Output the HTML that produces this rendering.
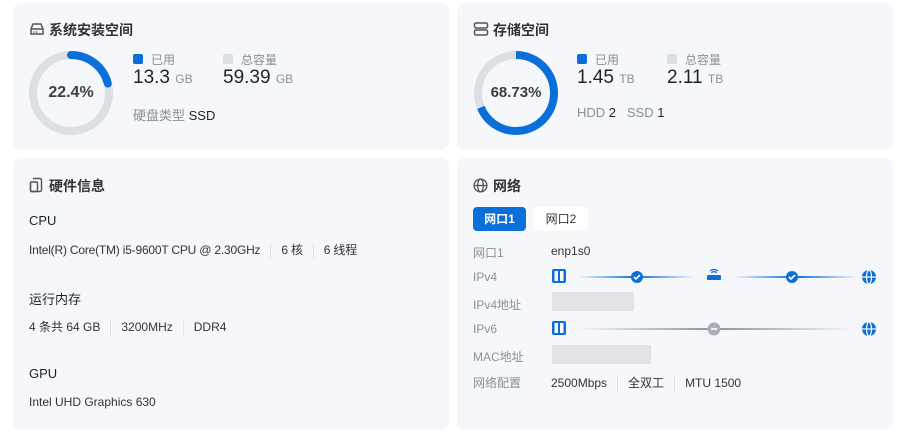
<!DOCTYPE html><html><head><meta charset="utf-8"><style>
*{margin:0;padding:0;box-sizing:border-box}
body{width:901px;height:436px;background:#fff;font-family:"Liberation Sans","Noto Sans CJK SC",sans-serif;color:#1f2329;position:relative;overflow:hidden}
.card{position:absolute;background:#f5f7fb;border-radius:8px}
.a{position:absolute;white-space:nowrap}
.t{font-size:14px;font-weight:bold;color:#333}
.g{color:#8a8f99}
.s{font-size:12px}
.sep{display:inline-block;width:1px;height:14px;background:#dcdfe6;vertical-align:middle;margin:0 10px}
.big{font-size:19px;color:#1f2329}
.big small{font-size:12px;color:#8a8f99}
.blur{position:absolute;background:#e2e3e6}
</style></head><body>
<div class="card" style="left:13px;top:3px;width:436px;height:147px"></div>
<div class="card" style="left:457px;top:3px;width:436px;height:147px"></div>
<div class="card" style="left:13px;top:158px;width:436px;height:272px"></div>
<div class="card" style="left:457px;top:158px;width:436px;height:272px"></div>

<svg class="a" style="left:29px;top:22px" width="16" height="14" viewBox="0 0 16 14"><path d="M2 7 L4 2 H12 L14 7 V12 H2 Z M2 7 H14" fill="none" stroke="#555" stroke-width="1.5"/><circle cx="5" cy="10" r=".8" fill="#555"/><circle cx="7.5" cy="10" r=".8" fill="#555"/></svg>
<div class="a t" style="left:49px;top:20px">系统安装空间</div>
<svg class="a" style="left:29px;top:51px" width="84" height="84"><circle cx="42" cy="42" r="38" fill="none" stroke="#dcdfe5" stroke-width="8"/><circle cx="42" cy="42" r="38" fill="none" stroke="#0a6fd9" stroke-width="8" stroke-dasharray="50 300" transform="rotate(-90 42 42)" stroke-linecap="round"/></svg>
<div class="a" style="left:29px;top:84px;width:84px;text-align:center;font-size:16px;font-weight:bold;color:#3a3f47">22.4%</div>
<div class="a s g" style="left:133px;top:51px"><span style="display:inline-block;width:10px;height:10px;background:#0a6fd9;border-radius:2px;margin-right:8px"></span>已用</div>
<div class="a s g" style="left:223px;top:51px"><span style="display:inline-block;width:10px;height:10px;background:#dcdfe5;border-radius:2px;margin-right:8px"></span>总容量</div>
<div class="a big" style="left:133px;top:67px">13.3 <small>GB</small></div>
<div class="a big" style="left:223px;top:67px">59.39 <small>GB</small></div>
<div class="a" style="left:133px;top:105px;font-size:13px"><span class="g">硬盘类型</span> SSD</div>

<svg class="a" style="left:473px;top:22px" width="16" height="14" viewBox="0 0 16 14"><rect x="1.5" y="1" width="13" height="5" rx="1.5" fill="none" stroke="#555" stroke-width="1.5"/><rect x="1.5" y="8" width="13" height="5" rx="1.5" fill="none" stroke="#555" stroke-width="1.5"/></svg>
<div class="a t" style="left:493px;top:20px">存储空间</div>
<svg class="a" style="left:474px;top:51px" width="84" height="84"><circle cx="42" cy="42" r="38" fill="none" stroke="#dcdfe5" stroke-width="8"/><circle cx="42" cy="42" r="38" fill="none" stroke="#0a6fd9" stroke-width="8" stroke-dasharray="164 300" transform="rotate(-90 42 42)"/></svg>
<div class="a" style="left:474px;top:84px;width:84px;text-align:center;font-size:15px;font-weight:bold;color:#3a3f47">68.73%</div>
<div class="a s g" style="left:577px;top:51px"><span style="display:inline-block;width:10px;height:10px;background:#0a6fd9;border-radius:2px;margin-right:8px"></span>已用</div>
<div class="a s g" style="left:667px;top:51px"><span style="display:inline-block;width:10px;height:10px;background:#dcdfe5;border-radius:2px;margin-right:8px"></span>总容量</div>
<div class="a big" style="left:577px;top:67px">1.45 <small>TB</small></div>
<div class="a big" style="left:667px;top:67px">2.11 <small>TB</small></div>
<div class="a" style="left:577px;top:105px;font-size:13px"><span class="g">HDD</span> 2 &nbsp; <span class="g">SSD</span> 1</div>

<svg class="a" style="left:29px;top:177px" width="14" height="16" viewBox="0 0 14 16"><path d="M4 1.5 H11 a1.5 1.5 0 0 1 1.5 1.5 V13 a1.5 1.5 0 0 1 -1.5 1.5 H3 a1.5 1.5 0 0 1 -1.5 -1.5 V6" fill="none" stroke="#555" stroke-width="1.4"/><rect x="1.5" y="5" width="7" height="9.5" rx="1" fill="none" stroke="#555" stroke-width="1.4"/></svg>
<div class="a t" style="left:49px;top:176px">硬件信息</div>
<div class="a" style="left:29px;top:213px;font-size:13px">CPU</div>
<div class="a s" style="left:29px;top:241px;color:#333;letter-spacing:-0.2px">Intel(R) Core(TM) i5-9600T CPU @ 2.30GHz<span class="sep"></span>6 核<span class="sep"></span>6 线程</div>
<div class="a" style="left:29px;top:289px;font-size:13px">运行内存</div>
<div class="a s" style="left:29px;top:318px;color:#333">4 条共 64 GB<span class="sep"></span>3200MHz<span class="sep"></span>DDR4</div>
<div class="a" style="left:29px;top:366px;font-size:13px">GPU</div>
<div class="a s" style="left:29px;top:395px;color:#333">Intel UHD Graphics 630</div>

<svg class="a" style="left:473px;top:178px" width="15" height="15" viewBox="0 0 16 16"><circle cx="8" cy="8" r="6.8" fill="none" stroke="#555" stroke-width="1.4"/><ellipse cx="8" cy="8" rx="3" ry="6.8" fill="none" stroke="#555" stroke-width="1.4"/><path d="M1.2 8H14.8" stroke="#555" stroke-width="1.4"/></svg>
<div class="a t" style="left:493px;top:176px">网络</div>
<div class="a" style="left:473px;top:207px;width:53px;height:24px;background:#0a6fd9;border-radius:4px;color:#fff;font-size:12px;font-weight:bold;text-align:center;line-height:24px">网口1</div>
<div class="a" style="left:534px;top:207px;width:54px;height:24px;background:#fff;border-radius:4px;color:#333;font-size:12px;text-align:center;line-height:24px">网口2</div>
<div class="a s g" style="left:473px;top:244px">网口1</div>
<div class="a s" style="left:551px;top:244px;color:#333">enp1s0</div>
<div class="a s g" style="left:473px;top:270px">IPv4</div>
<div class="a s g" style="left:473px;top:296px">IPv4地址</div>
<div class="a s g" style="left:473px;top:322px">IPv6</div>
<div class="a s g" style="left:473px;top:348px">MAC地址</div>
<div class="a s g" style="left:473px;top:374px">网络配置</div>
<div class="a s" style="left:551px;top:374px;color:#333">2500Mbps<span class="sep"></span>全双工<span class="sep"></span>MTU 1500</div>
<div class="blur" style="left:552px;top:292px;width:82px;height:19px"></div>
<div class="blur" style="left:552px;top:345px;width:99px;height:19px"></div>
<svg class="a" style="left:545px;top:265px" width="340" height="75">
<defs><linearGradient id="l" x1="0" x2="1"><stop offset="0" stop-color="#0a6fd9" stop-opacity="0"/><stop offset=".5" stop-color="#0a6fd9"/><stop offset="1" stop-color="#0a6fd9" stop-opacity="0"/></linearGradient>
<linearGradient id="m" x1="0" x2="1"><stop offset="0" stop-color="#8a93a3" stop-opacity="0"/><stop offset=".5" stop-color="#8a93a3"/><stop offset="1" stop-color="#8a93a3" stop-opacity="0"/></linearGradient></defs>
<g id="srv"><rect x="7" y="4" width="14" height="14" rx="2" fill="#0a6fd9"/><rect x="9.5" y="6" width="3.5" height="10" fill="#fff"/><rect x="15" y="6" width="3.5" height="10" fill="#fff"/></g>
<rect x="33" y="11" width="117" height="2" fill="url(#l)"/><circle cx="92" cy="12" r="6" fill="#0a6fd9"/><path d="M89 12l2 2 4-4" stroke="#fff" stroke-width="1.6" fill="none"/>
<rect x="162" y="10" width="14" height="5" rx="1" fill="#0a6fd9"/><path d="M165 6a6 6 0 0 1 8 0M166.5 8a3 3 0 0 1 5 0" stroke="#0a6fd9" stroke-width="1.2" fill="none"/>
<rect x="188" y="11" width="125" height="2" fill="url(#l)"/><circle cx="247" cy="12" r="6" fill="#0a6fd9"/><path d="M244 12l2 2 4-4" stroke="#fff" stroke-width="1.6" fill="none"/>
<g><circle cx="324" cy="12" r="7" fill="#0a6fd9"/><ellipse cx="324" cy="12" rx="2.5" ry="7" fill="none" stroke="#fff" stroke-width="1.2"/><path d="M317 12h14" stroke="#fff" stroke-width="1.2"/></g>
<use href="#srv" y="52"/>
<rect x="30" y="63" width="280" height="2" fill="url(#m)"/><circle cx="169" cy="64" r="6.5" fill="#a8b0be"/><path d="M166 64h6" stroke="#fff" stroke-width="1.6"/>
<g transform="translate(0,52)"><circle cx="324" cy="12" r="7" fill="#0a6fd9"/><ellipse cx="324" cy="12" rx="2.5" ry="7" fill="none" stroke="#fff" stroke-width="1.2"/><path d="M317 12h14" stroke="#fff" stroke-width="1.2"/></g>
</svg>
</body></html>
